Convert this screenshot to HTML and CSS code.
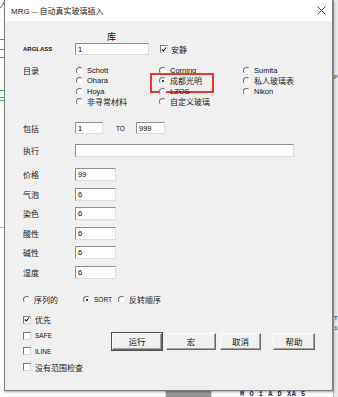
FILE: index.html
```html
<!DOCTYPE html>
<html lang="zh">
<head>
<meta charset="utf-8">
<title>MRG</title>
<link rel="stylesheet" href="styles.css">
</head>
<body>
<div class="desk">
  <svg class="bg-curve" width="6" height="10" viewBox="0 0 6 10"><path d="M0 8 Q3 6 5 0" fill="none" stroke="#3b5bd8" stroke-width="1"/></svg>
  <span class="mark red" style="top:39px"></span>
  <span class="mark red" style="top:49px"></span>
  <span class="mark red" style="top:57px"></span>
  <span class="mark green" style="top:90px"></span>
  <span class="mark green" style="top:97px"></span>
  <span class="mark green" style="top:100px"></span>
  <span class="mark blue" style="top:227px"></span>
  <div class="rstrip">
    <span class="frag brown" style="top:75px">P</span>
    <span class="frag navy" style="top:316px">T</span>
    <span class="frag navy" style="top:326px">1</span>
  </div>
  <div class="bstrip">
    <span class="gbox"></span>
    <span class="btext">M O 1 A D XA 5</span>
  </div>

  <div class="win">
    <div class="titlebar">
      <span class="title"><span class="lat-t">MRG --</span> 自动真实玻璃插入</span>
      <svg class="close" width="9" height="9" viewBox="0 0 9 9"><path d="M0.5 0.5L8.5 8.5M8.5 0.5L0.5 8.5" stroke="#444" stroke-width="1"/></svg>
    </div>
    <div class="body">
      <div class="row r-lib"><span class="lib">库</span></div>

      <div class="row r-arg">
        <span class="lbl lat-b">ARGLASS</span>
        <span class="input w-arg">1</span>
        <span class="chk on"><svg width="7" height="7" viewBox="0 0 7 7"><path d="M1 3.3L2.8 5.2L6 1.2" fill="none" stroke="#000" stroke-width="1.2"/></svg></span>
        <span class="zh chk-t">安静</span>
      </div>

      <div class="catalog">
        <span class="lbl zh cat-l">目录</span>
        <div class="radios">
          <div class="radio"><span class="rb"></span><span class="lat">Schott</span></div>
          <div class="radio"><span class="rb"></span><span class="lat">Corning</span></div>
          <div class="radio"><span class="rb"></span><span class="lat">Sumita</span></div>
          <div class="radio"><span class="rb"></span><span class="lat">Ohara</span></div>
          <div class="radio marked"><span class="rb on"></span><span class="zh">成都光明</span></div>
          <div class="radio"><span class="rb"></span><span class="zh">私人玻璃表</span></div>
          <div class="radio"><span class="rb"></span><span class="lat">Hoya</span></div>
          <div class="radio"><span class="rb"></span><span class="lat">LZOS</span></div>
          <div class="radio"><span class="rb"></span><span class="lat">Nikon</span></div>
          <div class="radio"><span class="rb"></span><span class="zh">非寻常材料</span></div>
          <div class="radio"><span class="rb"></span><span class="zh">自定义玻璃</span></div>
        </div>
      </div>

      <div class="row r-inc">
        <span class="lbl zh">包括</span>
        <span class="input w-from">1</span>
        <span class="to">TO</span>
        <span class="input w-to">999</span>
      </div>

      <div class="row r-exec">
        <span class="lbl zh">执行</span>
        <span class="input w-exec"></span>
      </div>

      <div class="props">
        <div class="prow"><span class="lbl zh">价格</span><span class="input w-prop">99</span></div>
        <div class="prow"><span class="lbl zh">气泡</span><span class="input w-prop">6</span></div>
        <div class="prow"><span class="lbl zh">染色</span><span class="input w-prop">6</span></div>
        <div class="prow"><span class="lbl zh">酸性</span><span class="input w-prop">6</span></div>
        <div class="prow"><span class="lbl zh">碱性</span><span class="input w-prop">6</span></div>
        <div class="prow"><span class="lbl zh">湿度</span><span class="input w-prop">6</span></div>
      </div>

      <div class="row r-order">
        <div class="radio o1"><span class="rb"></span><span class="zh">序列的</span></div>
        <div class="radio o2"><span class="rb on"></span><span class="lat-s">SORT</span></div>
        <div class="radio"><span class="rb"></span><span class="zh">反转顺序</span></div>
      </div>

      <div class="bottom">
        <div class="checks">
          <div class="crow"><span class="chk on"><svg width="7" height="7" viewBox="0 0 7 7"><path d="M1 3.3L2.8 5.2L6 1.2" fill="none" stroke="#000" stroke-width="1.2"/></svg></span><span class="zh">优先</span></div>
          <div class="crow"><span class="chk"></span><span class="lat-s">SAFE</span></div>
          <div class="crow"><span class="chk"></span><span class="lat-s">ILINE</span></div>
          <div class="crow"><span class="chk"></span><span class="zh">没有范围检查</span></div>
        </div>
        <div class="buttons">
          <span class="btn default w50">运行</span>
          <span class="btn w50">宏</span>
          <span class="btn w41">取消</span>
          <span class="btn w42 help">帮助</span>
        </div>
      </div>
    </div>
  </div>
</div>
</body>
</html>
```

FILE: styles.css
```css
* { box-sizing: border-box; margin: 0; padding: 0; }

html, body {
  width: 338px;
  height: 397px;
  overflow: hidden;
}

body {
  background: #fcfcfc;
  font-family: "Liberation Sans", "Noto Sans CJK SC", sans-serif;
  color: #111;
}

.desk {
  position: relative;
  width: 338px;
  height: 397px;
  overflow: hidden;
  background: #fcfcfc;
}

/* background scraps behind the dialog */
.bg-curve { position: absolute; left: 0; top: 0; }
.mark { position: absolute; left: 0; width: 4px; height: 1px; }
.mark.red { background: #e0585a; }
.mark.green { background: #3cc04a; }
.mark.blue { background: #a9b7d6; }

.rstrip {
  position: absolute;
  left: 333px;
  top: 0;
  width: 5px;
  height: 397px;
  background: #e9e9e9;
  border-left: 1px solid #b4b4b4;
}
.frag {
  position: absolute;
  left: 0;
  font-family: "Liberation Mono", monospace;
  font-size: 6px;
  line-height: 1;
  font-weight: bold;
}
.frag.brown { color: #8a5a3a; }
.frag.navy { color: #3a4f8a; }

.bstrip {
  position: absolute;
  left: 0;
  top: 390px;
  width: 333px;
  height: 7px;
  background: #fbfbfb;
}
.gbox {
  position: absolute;
  left: 165px;
  top: 0;
  width: 47px;
  height: 7px;
  background: #959595;
  border: 1px solid #cfcfcf;
  border-bottom: none;
}
.btext {
  position: absolute;
  left: 240px;
  top: 1px;
  font-family: "Liberation Mono", monospace;
  font-size: 7px;
  line-height: 1;
  font-weight: bold;
  color: #1e2a55;
  letter-spacing: 0.5px;
  white-space: pre;
}

/* dialog window */
.win {
  position: absolute;
  left: 4px;
  top: 0;
  width: 329px;
  height: 391px;
  background: #f0f0f0;
  border: 1px solid #7c7c7c;
  border-top: none;
  box-shadow: 1px 1px 2px rgba(0, 0, 0, 0.35);
  display: flex;
  flex-direction: column;
}

.titlebar {
  flex: none;
  height: 21px;
  background: #fff;
  display: flex;
  align-items: center;
  justify-content: space-between;
  padding: 0 6px;
}
.title {
  font-size: 8px;
  color: #222;
  white-space: nowrap;
}
.lat-t { font-size: 8px; }
.close { display: block; }

.body {
  flex: 1;
  padding-left: 18px;
  display: flex;
  flex-direction: column;
  font-size: 8px;
}

.row {
  display: flex;
  align-items: center;
  flex: none;
}

.lbl {
  width: 52px;
  flex: none;
  white-space: nowrap;
}

.zh { font-size: 8px; white-space: nowrap; color: #222; }
.lat { font-size: 7.5px; white-space: nowrap; }
.lat-s { font-size: 6.5px; white-space: nowrap; }
.lat-b { font-size: 6px; font-weight: bold; }

.r-lib { margin-top: 9px; height: 12px; }
.lib { margin-left: 84px; font-size: 9px; }

.r-arg { margin-top: 1px; height: 12px; }

.input {
  display: flex;
  align-items: center;
  height: 12px;
  padding-left: 2px;
  background: #fff;
  border: 1px solid;
  border-color: #8f8f8f #dedede #dedede #8f8f8f;
  font-size: 7.5px;
  color: #000;
  flex: none;
}
.w-arg { width: 74px; }
.w-from { width: 28px; }
.w-to { width: 29px; }
.w-exec { width: 219px; height: 13px; }
.w-prop { width: 41px; height: 13px; }

.chk {
  width: 8px;
  height: 8px;
  flex: none;
  background: #fff;
  border: 1px solid;
  border-color: #7a7a7a #d5d5d5 #d5d5d5 #7a7a7a;
  display: flex;
  align-items: center;
  justify-content: center;
}
.chk svg { display: block; }
.r-arg .chk { margin-left: 11px; }
.chk-t { margin-left: 3px; }

/* catalog radios */
.catalog {
  margin-top: 10px;
  display: flex;
  flex: none;
}
.cat-l { height: 10.5px; display: flex; align-items: center; }
.radios {
  margin-left: 1px;
  display: grid;
  grid-template-columns: 83px 84px 1fr;
  grid-auto-rows: 10.5px;
}
.radio {
  display: flex;
  align-items: center;
  gap: 4px;
  position: relative;
}
.rb {
  width: 7px;
  height: 7px;
  flex: none;
  border-radius: 50%;
  border: 1px solid;
  border-color: #6f6f6f #f8f8f8 #f8f8f8 #6f6f6f;
  background: #fff;
  position: relative;
}
.rb.on::after {
  content: "";
  position: absolute;
  left: 1.5px;
  top: 1.5px;
  width: 2px;
  height: 2px;
  border-radius: 50%;
  background: #000;
}
.marked::after {
  content: "";
  position: absolute;
  left: -9px;
  top: -2.5px;
  width: 60px;
  height: 16px;
  border: 2px solid #e8382c;
}

.r-inc { margin-top: 15px; height: 12px; }
.to {
  margin-left: 13px;
  width: 20px;
  font-size: 6.5px;
}

.r-exec { margin-top: 10px; height: 13px; }

.props {
  margin-top: 11px;
  display: grid;
  grid-auto-rows: 13px;
  row-gap: 6.6px;
}
.prow { display: flex; align-items: center; }

.r-order { margin-top: 16px; height: 10px; }
.o1 { width: 60px; }
.o2 { width: 35px; }

.bottom {
  margin-top: 7px;
  display: flex;
  align-items: flex-start;
}
.checks {
  width: 89px;
  flex: none;
  display: grid;
  grid-auto-rows: 15.8px;
}
.crow {
  display: flex;
  align-items: center;
  gap: 4px;
}

.buttons {
  margin-top: 21px;
  display: flex;
  gap: 4px;
}
.btn {
  height: 17px;
  display: flex;
  align-items: center;
  justify-content: center;
  font-size: 8.5px;
  background: #f0f0f0;
  border: 1px solid;
  border-color: #fdfdfd #696969 #696969 #fdfdfd;
  box-shadow: inset -1px -1px 0 #a0a0a0;
  flex: none;
}
.btn.default {
  outline: 1px solid #505050;
  outline-offset: 0;
}
.w50 { width: 50px; }
.w41 { width: 41px; }
.w42 { width: 42px; }
.help { margin-left: 8px; }
```
